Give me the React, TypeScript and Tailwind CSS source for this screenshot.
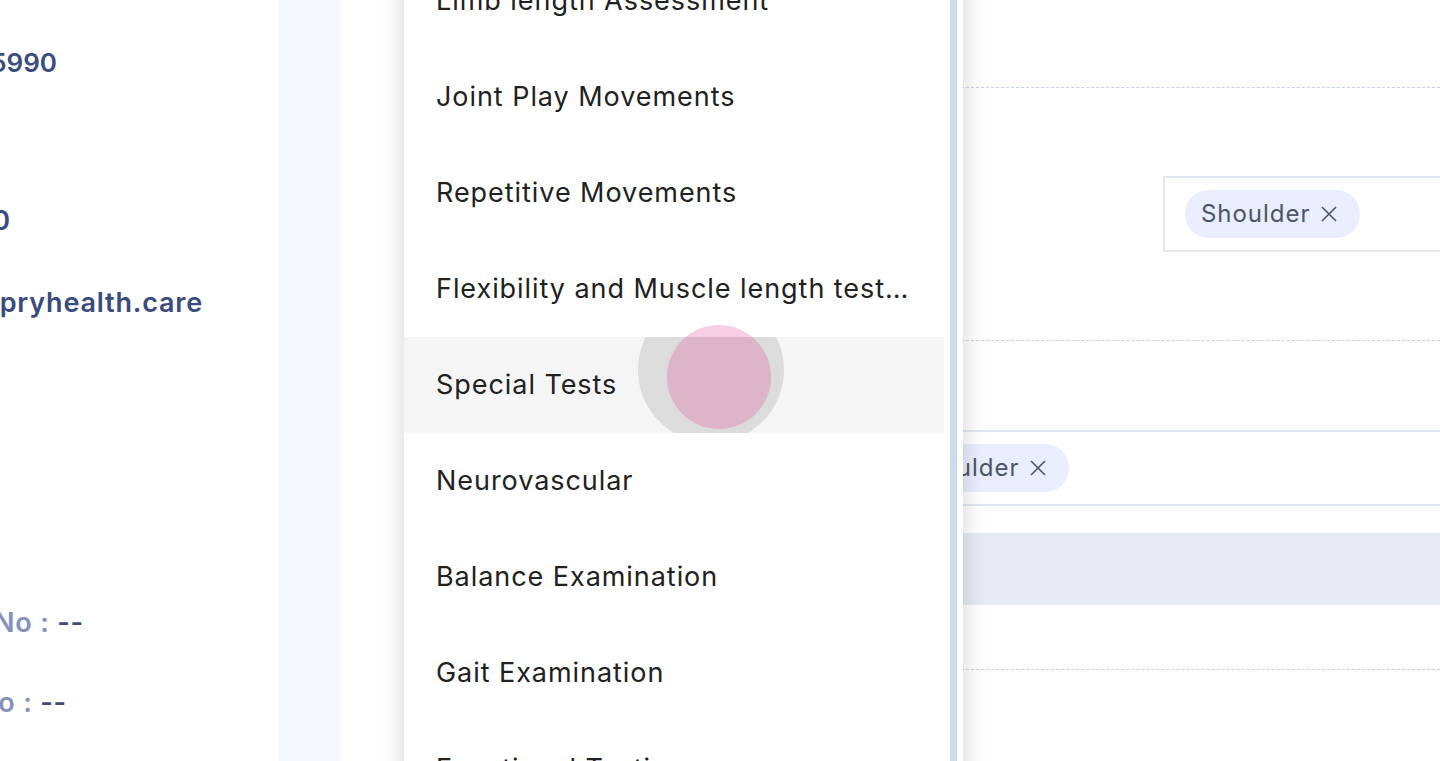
import React from "react";

const OPTIONS = [
  "Limb length Assessment",
  "Joint Play Movements",
  "Repetitive Movements",
  "Flexibility and Muscle length testing",
  "Special Tests",
  "Neurovascular",
  "Balance Examination",
  "Gait Examination",
  "Functional Testing",
];

function Clip({ width, children }: { width: number; children: React.ReactNode }) {
  // text is cut off at the left edge of the viewport, so align it to the right and clip
  return (
    <div className="flex h-[40px] items-center justify-end overflow-hidden whitespace-nowrap" style={{ width }}>
      {children}
    </div>
  );
}

function Chip() {
  return (
    <span className="flex h-[48px] items-center gap-[10px] rounded-full bg-[#eaedfd] pl-[16px] pr-[22px] text-[24px] tracking-[0.04em] text-[#4a5568]">
      Shoulder
      <svg width="18" height="18" viewBox="0 0 18 18" fill="none" stroke="#4a5568" strokeWidth="1.6">
        <path d="M2 2l14 14M16 2L2 16" />
      </svg>
    </span>
  );
}

export default function App() {
  return (
    <div
      className="relative flex h-[761px] w-[1440px] overflow-hidden bg-white"
      style={{ fontFamily: "Inter, 'Open Sans', sans-serif" }}
    >
      {/* Patient details (cut off on the left) */}
      <aside className="flex w-[278px] shrink-0 flex-col text-[27px] font-semibold tracking-[0.03em] text-[#3b4b7c]">
        <div className="mt-[42px] text-[26px] tracking-normal">
          <Clip width={57}>+91 9845635990</Clip>
        </div>
        <div className="mt-[119px]">
          <Clip width={11}>20</Clip>
        </div>
        <div className="mt-[42px]">
          <Clip width={203}>info@spryhealth.care</Clip>
        </div>
        <div className="mt-[280px]">
          <Clip width={84}>
            <span className="text-[#8492b7]">Alternate No :&nbsp;</span>--
          </Clip>
        </div>
        <div className="mt-[40px]">
          <Clip width={67}>
            <span className="text-[#8492b7]">Aadhar No :&nbsp;</span>--
          </Clip>
        </div>
      </aside>

      <div className="w-[62px] shrink-0 bg-[#f5f8fd]" />

      {/* Assessment form behind the dropdown */}
      <main className="flex flex-1 flex-col pl-[120px]">
        <div className="h-[88px] border-b border-dashed border-[#c7d0ec]" />
        <div className="h-[253px] border-b border-dashed border-[#c7d0ec] pt-[88px] pl-[703px]">
          <div className="flex h-[76px] items-center border-2 border-r-0 border-[#e3e7ef] pl-[20px]">
            <Chip />
          </div>
        </div>
        <div className="h-[329px] border-b border-dashed border-[#c7d0ec] pt-[89px] pl-[410px]">
          <div className="flex h-[76px] items-center border-y-2 border-[#e3e7ef] pl-[24px]">
            <Chip />
          </div>
          <div className="mt-[27px] -ml-[410px] h-[72px] bg-[#e6eaf3]" />
        </div>
      </main>

      {/* Open select menu */}
      <div className="absolute top-[-47px] left-[404px] flex h-[900px] w-[559px] bg-white shadow-[0_0_22px_rgba(0,0,0,0.18)]">
        <ul className="w-[540px] text-[27px] tracking-[0.035em] text-[#212121]">
          {OPTIONS.map((o) => (
            <li
              key={o}
              className={
                o === "Special Tests"
                  ? "relative flex h-[96px] items-center overflow-hidden bg-[#f5f5f5] px-[32px]"
                  : "flex h-[96px] items-center px-[32px]"
              }
            >
              {o === "Special Tests" && (
                <span className="absolute top-[-40px] left-[234px] h-[146px] w-[146px] rounded-full bg-[#dcdcdc]" />
              )}
              <span className="relative truncate">{o}</span>
            </li>
          ))}
        </ul>
        <div className="flex w-[19px] pl-[6px]">
          <div className="w-[7px] bg-[#d0daee]" />
        </div>
      </div>

      {/* Touch indicator */}
      <div className="absolute top-[325px] left-[667px] h-[104px] w-[104px] rounded-full bg-[rgba(222,60,140,0.25)]" />
    </div>
  );
}
